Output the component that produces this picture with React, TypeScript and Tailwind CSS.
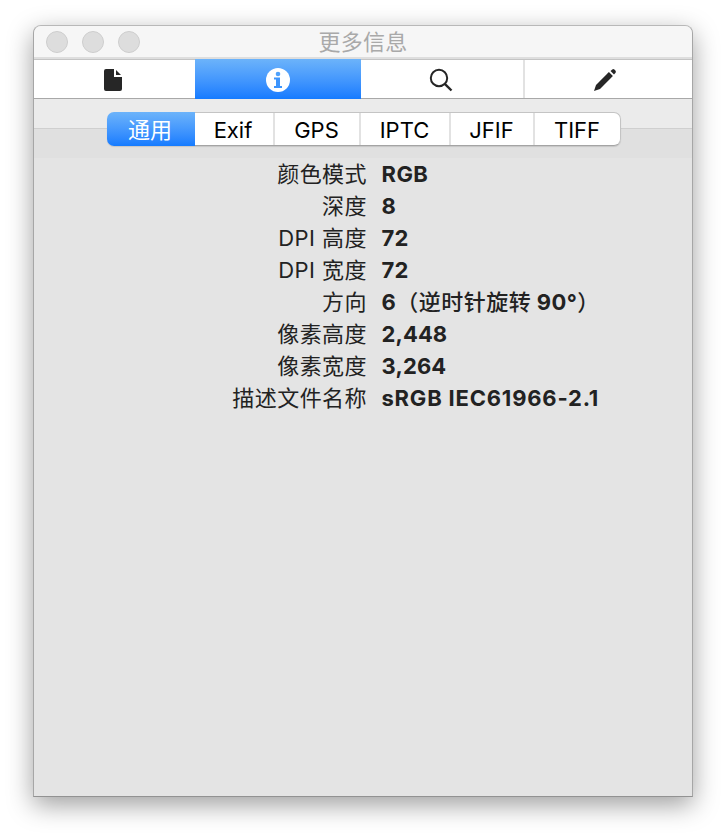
import React from "react";

const font = "font-['Inter','Noto_Sans_CJK_SC',sans-serif]";

const rows: [string, React.ReactNode, string][] = [
  ["颜色模式", "RGB", "tracking-[0.45px]"],
  ["深度", "8", ""],
  ["DPI 高度", "72", "tracking-[0.2px]"],
  ["DPI 宽度", "72", "tracking-[0.2px]"],
  ["方向", <>6<span className="font-medium tracking-[0.5px]">（逆时针旋转</span> 90°<span className="font-medium">）</span></>, "tracking-[0.4px]"],
  ["像素高度", "2,448", "tracking-[0.1px]"],
  ["像素宽度", "3,264", "tracking-[0.15px]"],
  ["描述文件名称", "sRGB IEC61966-2.1", "tracking-[0.8px]"],
];

const tabs: [string, string][] = [
  ["Exif", "w-[80px] pr-[2px]"],
  ["GPS", "w-[86px] pr-[1px]"],
  ["IPTC", "w-[90px] pr-[1px]"],
  ["JFIF", "w-[84px] pr-[1px]"],
  ["TIFF", "w-[86px] rounded-r-[7px]"],
];

function FileIcon() {
  return (
    <svg width="18" height="22" viewBox="0 0 18 22" fill="#262626">
      <path d="M2 0H10V8H18V20a2 2 0 0 1-2 2H2a2 2 0 0 1-2-2V2a2 2 0 0 1 2-2Z" />
      <path d="M12 1L17 6H12Z" />
    </svg>
  );
}

function InfoIcon() {
  return (
    <svg width="24" height="24" viewBox="0 0 24 24">
      <circle cx="12" cy="12" r="12" fill="#fff" />
      <circle cx="12" cy="6" r="2.3" fill="#4fa1fb" />
      <path d="M8 9.500h6v8.500h2v2H8v-2h2v-6.500H8Z" fill="#3d95fd" />
    </svg>
  );
}

function SearchIcon() {
  return (
    <svg width="24" height="24" viewBox="0 0 24 24" fill="none" stroke="#262626" strokeWidth="2">
      <circle cx="10" cy="10" r="8.200" />
      <path d="M15.800 15.800L22.500 22.500" strokeWidth="2.400" />
    </svg>
  );
}

function PencilIcon() {
  return (
    <svg width="24" height="24" viewBox="0 0 24 24" fill="#262626">
      <path d="M1 23L3 17L15.900 4.100L19.900 8.100L7 21Z" />
      <path d="M17.500 3L19.300 1.400Q20.300.7 21.400 1.600L22.400 2.600Q23.300 3.700 22.600 4.700L21 6.500Z" />
    </svg>
  );
}

export default function App() {
  return (
    <div className={`h-[838px] w-[726px] overflow-hidden bg-white pt-[25px] pl-[33px] ${font}`}>
      <div className="flex h-[772px] w-[660px] flex-col overflow-hidden rounded-t-[8px] border border-[#a6a6a6] border-t-[#b8b8b8] border-b-[#929292] bg-[#e4e4e4] shadow-[0_8px_26px_rgba(0,0,0,0.38)]">
        <header className="relative flex h-[33px] shrink-0 items-center justify-center border-b-2 border-[#dedede] bg-[#f6f6f6] pt-[2px]">
          <div className="absolute top-[5px] left-[12px] flex gap-[14px]">
            {[0, 1, 2].map((i) => (
              <span key={i} className="size-[22px] rounded-full border border-[#cdcdcd] bg-[#dddddd]" />
            ))}
          </div>
          <h1 className="text-[22px] leading-[31px] tracking-[0.3px] text-[#a9a9a9]">更多信息</h1>
        </header>
        <nav className="flex h-[40px] shrink-0 border-t border-b border-t-[#c4c4c4] border-b-[#a8a8a8] bg-white">
          <button className="flex w-[161px] items-center justify-center pt-[2px] pr-[3px]"><FileIcon /></button>
          <button className="-my-px flex w-[166px] items-center justify-center bg-linear-to-b from-[#6cb3fa] to-[#147bff] pt-[2px]"><InfoIcon /></button>
          <button className="flex w-[164px] items-center justify-center border-r-2 border-[#e2e2e2] pt-[2px] pr-[2px]"><SearchIcon /></button>
          <button className="flex flex-1 items-center justify-center pt-[2px] pr-[8px]"><PencilIcon /></button>
        </nav>
        <main className="flex flex-1 flex-col bg-[linear-gradient(to_bottom,#ebebeb_29px,#cfcfcf_29px,#cfcfcf_30px,#e0e0e0_30px,#e0e0e0_59px,#e4e4e4_59px)]">
          <div className="mt-[13px] ml-[73px] flex h-[34px] w-[514px] rounded-[7px] text-[22px] shadow-[0_1px_1px_rgba(0,0,0,0.12)]">
            <button className="flex w-[88px] shrink-0 items-center justify-center rounded-l-[7px] bg-linear-to-b from-[#6cb3fa] to-[#147bff] pt-[2px] pr-[2px] text-white">通用</button>
            <div className="flex h-[34px] w-[426px] overflow-hidden rounded-r-[7px] border border-l-0 border-[#c4c4c4] border-b-[#a4a4a4] bg-white">
              {tabs.map(([t, w]) => (
                <button key={t} className={`flex shrink-0 items-center justify-center border-r-2 border-[#e2e2e2] pt-[2px] text-black last:border-r-0 last:pr-[2px] ${w}`}>{t}</button>
              ))}
            </div>
          </div>
          <dl className="mt-[12px] text-[22px] leading-[32px] text-[#222]">
            {rows.map(([k, v, c]) => (
              <div key={k} className="flex h-[32px] gap-[14.500px] whitespace-nowrap">
                <dt className="w-[333px] text-right tracking-[0.45px]">{k}</dt>
                <dd className={`font-bold ${c}`}>{v}</dd>
              </div>
            ))}
          </dl>
        </main>
      </div>
    </div>
  );
}
